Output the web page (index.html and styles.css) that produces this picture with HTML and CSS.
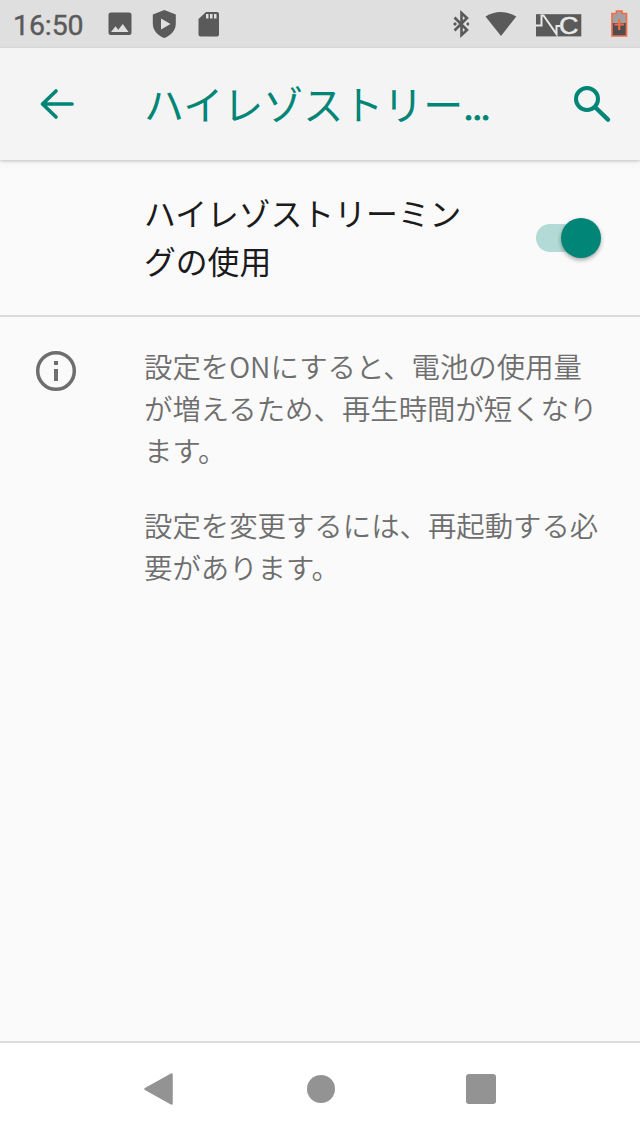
FILE: index.html
```html
<!DOCTYPE html>
<html lang="ja">
<head>
<meta charset="utf-8">
<title>ハイレゾストリーミング</title>
<link rel="stylesheet" href="styles.css">
</head>
<body>
<div class="screen">
  <div class="status-bar">
    <span class="clock">16:50</span>
    <svg class="status-icons" width="114" height="48" viewBox="106 0 114 48" fill="#5a5a5a">
      <path fill-rule="evenodd" d="M111 12.500h18a2.500 2.500 0 0 1 2.500 2.500v17.500a2.500 2.500 0 0 1-2.500 2.500h-18a2.500 2.500 0 0 1-2.500-2.500V15a2.500 2.500 0 0 1 2.500-2.500zM111 32h17.500l-5.700-8-4.500 5.800-2.800-3.600z"/>
      <path fill-rule="evenodd" d="M164.300 10l11.500 4.500v9c0 6.500-4.500 12-11.500 14.500-7-2.500-11.500-8-11.500-14.500v-9zM161 18.500v11l9.500-5.500z"/>
      <path fill-rule="evenodd" d="M206 12h11a2 2 0 0 1 2 2v20.500a2 2 0 0 1-2 2h-16.500a2 2 0 0 1-2-2V19zM206 14v4.500h2.500V14zM210 14v4.500h2.500V14zM214 14v4.500h2.500V14z"/>
    </svg>
    <svg class="status-icons status-end" width="190" height="48" viewBox="450 0 190 48">
      <path d="M454.500 17.500L467 30l-5.500 5V13l5.500 5L454.500 30.500" fill="none" stroke="#5a5a5a" stroke-width="2.600"/>
      <path d="M453 24l2-2 2 2-2 2zM466 24l2-2 1.500 2-1.500 2z" fill="#5a5a5a"/>
      <path d="M485.500 16.500c9.500-6 21-6 30.800 0L501 36z" fill="#5a5a5a"/>
      <rect x="536" y="14.200" width="45.300" height="22.200" fill="#5a5a5a"/>
      <path d="M536 25.500h5.500V15.500h2L556.500 34V26h4" fill="none" stroke="#e8e8e8" stroke-width="2"/>
      <text class="logo-letter" x="0" y="0" transform="translate(559 33.700) scale(1.120 1)">C</text>
      <path d="M616.500 11h5.500v2.500h4.500v9.500h-14.500v-9.500h4.500z" fill="#a0a0a0"/>
      <path d="M612 23h14.500v13h-14.500z" fill="#4e4e4e"/>
      <path d="M616.500 13.500v-2.500h5.500v2.500h4.500v22.500h-14.500v-22.500z" fill="none" stroke="#f26b4b" stroke-width="1.700"/>
      <path d="M619.200 19v11M614.500 24.500h9.500" stroke="#f26b4b" stroke-width="2.200"/>
    </svg>
  </div>

  <header class="app-bar">
    <svg width="36" height="34" viewBox="0 0 36 34" fill="none" stroke="#008577" stroke-width="3.700" stroke-linecap="round">
      <path d="M18 4L4.500 17 18 30M5 17h29" stroke-linejoin="round"/>
    </svg>
    <h1 class="title">ハイレゾストリー<span class="ellipsis">…</span></h1>
    <svg class="search" width="40" height="40" viewBox="572 84 40 40" fill="none" stroke="#008577">
      <circle cx="587" cy="99" r="11" stroke-width="4"/>
      <path d="M596.500 108.500L608 119.700" stroke-width="4.400" stroke-linecap="round"/>
    </svg>
  </header>

  <section class="setting-row">
    <div class="setting-label">ハイレゾストリーミン<br>グの使用</div>
    <div class="switch"><span class="thumb"></span></div>
  </section>

  <main class="info">
    <svg width="42" height="42" viewBox="0 0 42 42">
      <circle cx="21" cy="21" r="18.300" fill="none" stroke="#6e6e6e" stroke-width="3.500"/>
      <path d="M19 11h4v4h-4zM19 19h4v12h-4z" fill="#6e6e6e"/>
    </svg>
    <div class="info-text">
      <p>設定をONにすると、電池の使用量<br>が増えるため、再生時間が短くなり<br>ます。</p>
      <p>設定を変更するには、再起動する必<br>要があります。</p>
    </div>
  </main>

  <nav class="nav-bar">
    <svg width="32" height="36" viewBox="0 0 32 36"><path d="M2.500 18L28.500 3.500v29z" fill="#939393" stroke="#939393" stroke-width="2.500" stroke-linejoin="round"/></svg>
    <span class="home"></span>
    <span class="recent"></span>
  </nav>
</div>
</body>
</html>
```

FILE: styles.css
```css
* { box-sizing: border-box; }
body {
  margin: 0;
  background: #fafafa;
  font-family: "Noto Sans CJK JP", sans-serif;
}
.screen {
  display: flex;
  flex-direction: column;
  width: 640px;
  height: 1137px;
  overflow: hidden;
}
.status-bar {
  display: flex;
  align-items: center;
  flex: 0 0 48px;
  height: 48px;
  padding-left: 13px;
  background: #dfdfdf;
}
.clock {
  width: 93px;
  padding-top: 3px;
  font: 400 28.500px/44px Roboto, sans-serif;
  letter-spacing: -.1px;
  color: #5a5a5a;
  -webkit-text-stroke: .4px #5a5a5a;
}
.status-icons { display: block; }
.status-end { margin-left: auto; }
.logo-letter { font: 24px "Liberation Sans", sans-serif; fill: #e8e8e8; stroke: #e8e8e8; stroke-width: .5px; }
.app-bar {
  position: relative;
  display: flex;
  align-items: center;
  flex: 0 0 112px;
  height: 112px;
  padding: 0 28px 0 38px;
  background: #f4f4f4;
  box-shadow: 0 1px 3px rgba(0, 0, 0, .2), 0 3px 8px rgba(0, 0, 0, .05);
}
.title {
  margin: -3px 0 0 70px;
  font-size: 40px;
  font-weight: 400;
  line-height: 100px;
  color: #008577;
  white-space: nowrap;
}
.ellipsis {
  font-family: Roboto, sans-serif;
  font-size: 41px;
  line-height: 1;
  -webkit-text-stroke: 1px #008577;
}
.search { margin-left: auto; }
.setting-row {
  display: flex;
  align-items: center;
  justify-content: space-between;
  flex: 0 0 157px;
  padding: 0 39px 0 144px;
  border-bottom: 2px solid #dadada;
}
.setting-label {
  margin-top: -4px;
  font-size: 31.800px;
  line-height: 48px;
  color: #1b1b1b;
}
.switch {
  display: flex;
  justify-content: flex-end;
  align-items: center;
  width: 65px;
  height: 28px;
  background: linear-gradient(#b3dad6, #b3dad6) left / 50px 28px no-repeat;
  border-radius: 14px;
}
.thumb {
  width: 40px;
  height: 40px;
  flex: none;
  border-radius: 50%;
  background: #008577;
  box-shadow: 0 2px 4px rgba(0, 0, 0, .35);
}
.info {
  display: flex;
  align-items: flex-start;
  flex: 1;
  padding: 33px 0 0 35px;
}
.info-text {
  margin: -5px 0 0 67px;
  font-size: 28.400px;
  line-height: 42px;
  font-weight: 350;
  color: #6e6e6e;
  white-space: nowrap;
}
.info-text p { margin: 0 0 33px; }
.nav-bar {
  display: flex;
  align-items: center;
  flex: 0 0 96px;
  padding: 0 144px 2px 143px;
  justify-content: space-between;
  background: #fff;
  border-top: 2px solid #dcdcdc;
}
.home { width: 28px; height: 28px; border-radius: 50%; background: #939393; }
.recent { width: 30px; height: 30px; border-radius: 3px; background: #939393; }
```
